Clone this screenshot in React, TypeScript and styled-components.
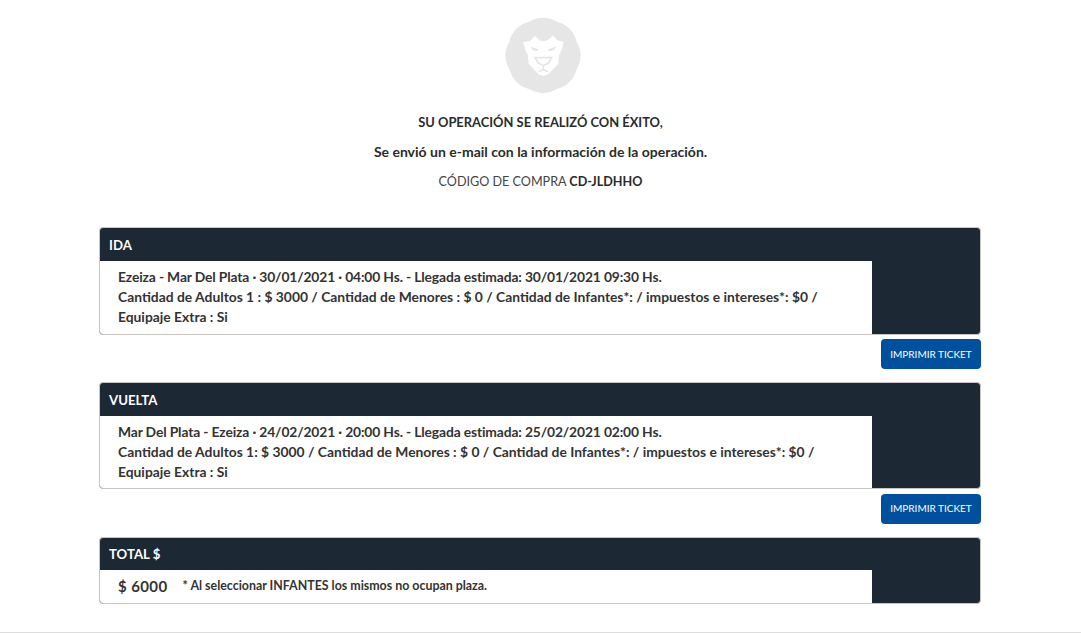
import styled, { createGlobalStyle } from 'styled-components';

const GlobalStyle = createGlobalStyle`
    html, body {
        margin: 0;
        padding: 0;
        background: #fff;
    }
    body {
        font-family: Lato, 'Noto Sans', 'Liberation Sans', sans-serif;
        color: #2b2b2b;
    }
`;

// eight soft lobes round the centre of the badge
const badgePath = () => {
    const point = (deg: number, r: number) => {
        const a = (deg * Math.PI) / 180;
        return `${(189 + r * Math.cos(a)).toFixed(1)} ${(165 + r * Math.sin(a)).toFixed(1)}`;
    };
    let d = `M${point(-112.5, 109)}`;
    for (let i = 0; i < 8; i++) {
        const peak = -90 + i * 45;
        d += ` Q${point(peak, 125)} ${point(peak + 22.5, 109)}`;
    }
    return d + ' Z';
};

const LionLogo = () => (
    <svg width="76" height="76" viewBox="75 50 228 228">
        <path fill="#e6e6e6" d={badgePath()} />
        <path
            fill="#fff"
            d="M129 125 L150 122 L165 106 L178 120 L190 123 L202 120 L220 106 L232 120 L251 125 L245 150 L237 165 L235 190 L218 208 L205 222 L190 227 L175 222 L162 208 L146 190 L144 165 L136 150 Z"
        />
        <path fill="#e6e6e6" d="M152 139 L176 147 L172 153 L158 150 Z" />
        <path fill="#e6e6e6" d="M228 139 L204 147 L208 153 L222 150 Z" />
        <path
            fill="none"
            stroke="#e6e6e6"
            strokeWidth="5"
            d="M165 172 L215 172 L205 188 L190 196 L175 188 Z M190 196 L190 208 L176 214 M190 208 L204 214"
        />
    </svg>
);

const Panel = ({
    title,
    short,
    children,
}: {
    title: string;
    short?: boolean;
    children: React.ReactNode;
}) => (
    <StyledPanel $short={short}>
        <PanelHeader $short={short}>{title}</PanelHeader>
        <PanelBody $short={short}>{children}</PanelBody>
    </StyledPanel>
);

const App = () => {
    return (
        <Page>
            <GlobalStyle />
            <Hero>
                <LogoWrap>
                    <LionLogo />
                </LogoWrap>
                <HeroTitle>SU OPERACIÓN SE REALIZÓ CON ÉXITO,</HeroTitle>
                <HeroLine>Se envió un e-mail con la información de la operación.</HeroLine>
                <HeroCode>
                    CÓDIGO DE COMPRA <strong>CD-JLDHHO</strong>
                </HeroCode>
            </Hero>
            <Content>
                <Panel title="IDA">
                    <RouteLine>
                        Ezeiza - Mar Del Plata · 30/01/2021 · 04:00 Hs. - Llegada estimada: 30/01/2021 09:30 Hs.
                    </RouteLine>
                    <br />
                    Cantidad de Adultos 1 : $ 3000 / Cantidad de Menores : $ 0 / Cantidad de Infantes*: / impuestos e intereses*: $0 /
                    <br />
                    Equipaje Extra : Si
                </Panel>
                <ButtonRow>
                    <PrintButton>IMPRIMIR TICKET</PrintButton>
                </ButtonRow>
                <Panel title="VUELTA">
                    <RouteLine>
                        Mar Del Plata - Ezeiza · 24/02/2021 · 20:00 Hs. - Llegada estimada: 25/02/2021 02:00 Hs.
                    </RouteLine>
                    <br />
                    Cantidad de Adultos 1: $ 3000 / Cantidad de Menores : $ 0 / Cantidad de Infantes*: / impuestos e intereses*: $0 /
                    <br />
                    Equipaje Extra : Si
                </Panel>
                <ButtonRow>
                    <PrintButton>IMPRIMIR TICKET</PrintButton>
                </ButtonRow>
                <Panel title="TOTAL $" short>
                    <TotalAmount>$ 6000</TotalAmount>
                    <TotalNote>* Al seleccionar INFANTES los mismos no ocupan plaza.</TotalNote>
                </Panel>
            </Content>
            <Divider />
        </Page>
    );
};

const Page = styled.div`
    width: 1081px;
    height: 633px;
    overflow: hidden;
`;

const Hero = styled.div`
    display: flex;
    flex-direction: column;
    align-items: center;
`;

const LogoWrap = styled.div`
    height: 76px;
    margin-top: 17px;
    margin-left: 5px;
`;

const HeroTitle = styled.div`
    margin-top: 20px;
    font-size: 12.9px;
    line-height: 18px;
    font-weight: 700;
`;

const HeroLine = styled.div`
    margin-top: 12px;
    font-size: 14px;
    line-height: 18px;
    font-weight: 700;
`;

const HeroCode = styled.div`
    margin-top: 12px;
    font-size: 12.6px;
    line-height: 18px;
    color: #444;

    strong {
        color: #2b2b2b;
    }
`;

const Content = styled.div`
    width: 882px;
    margin: 36px 0 0 99px;
`;

const StyledPanel = styled.div<{ $short?: boolean }>`
    margin-top: ${(p) => (p.$short ? '13.1px' : '0')};
    background: #1c2833;
    border: 1px solid #c9c5c2;
    border-radius: 4px;
    overflow: hidden;
`;

const PanelHeader = styled.div<{ $short?: boolean }>`
    height: ${(p) => (p.$short ? '32px' : '33px')};
    padding-left: 9px;
    font-size: 13.2px;
    line-height: ${(p) => (p.$short ? '32px' : '34px')};
    font-weight: 700;
    color: #fff;
`;

const PanelBody = styled.div<{ $short?: boolean }>`
    display: ${(p) => (p.$short ? 'flex' : 'block')};
    align-items: center;
    box-sizing: border-box;
    width: 772px;
    ${(p) => (p.$short ? 'height: 33px;' : '')}
    padding: ${(p) => (p.$short ? '0 0 0 18px' : '6.3px 0 6.3px 18px')};
    background: #fff;
    font-size: 13.85px;
    line-height: 20px;
    font-weight: 700;
    color: #333;
`;

const RouteLine = styled.span`
    letter-spacing: -0.14px;
`;

const ButtonRow = styled.div`
    display: flex;
    justify-content: flex-end;
    margin: 4.5px 0 12.5px;
`;

const PrintButton = styled.button`
    width: 100px;
    height: 30px;
    padding: 0 0 1px;
    background: #00509d;
    border: 0;
    border-radius: 4px;
    font-family: inherit;
    font-size: 10px;
    color: #fff;
`;

const TotalAmount = styled.span`
    font-size: 15px;
    letter-spacing: 0.4px;
`;

const TotalNote = styled.span`
    margin-left: 15px;
    font-size: 12.4px;
`;

const Divider = styled.div`
    position: absolute;
    left: 0;
    top: 632px;
    width: 1081px;
    border-top: 1px solid #ddd;
`;

export default App;
